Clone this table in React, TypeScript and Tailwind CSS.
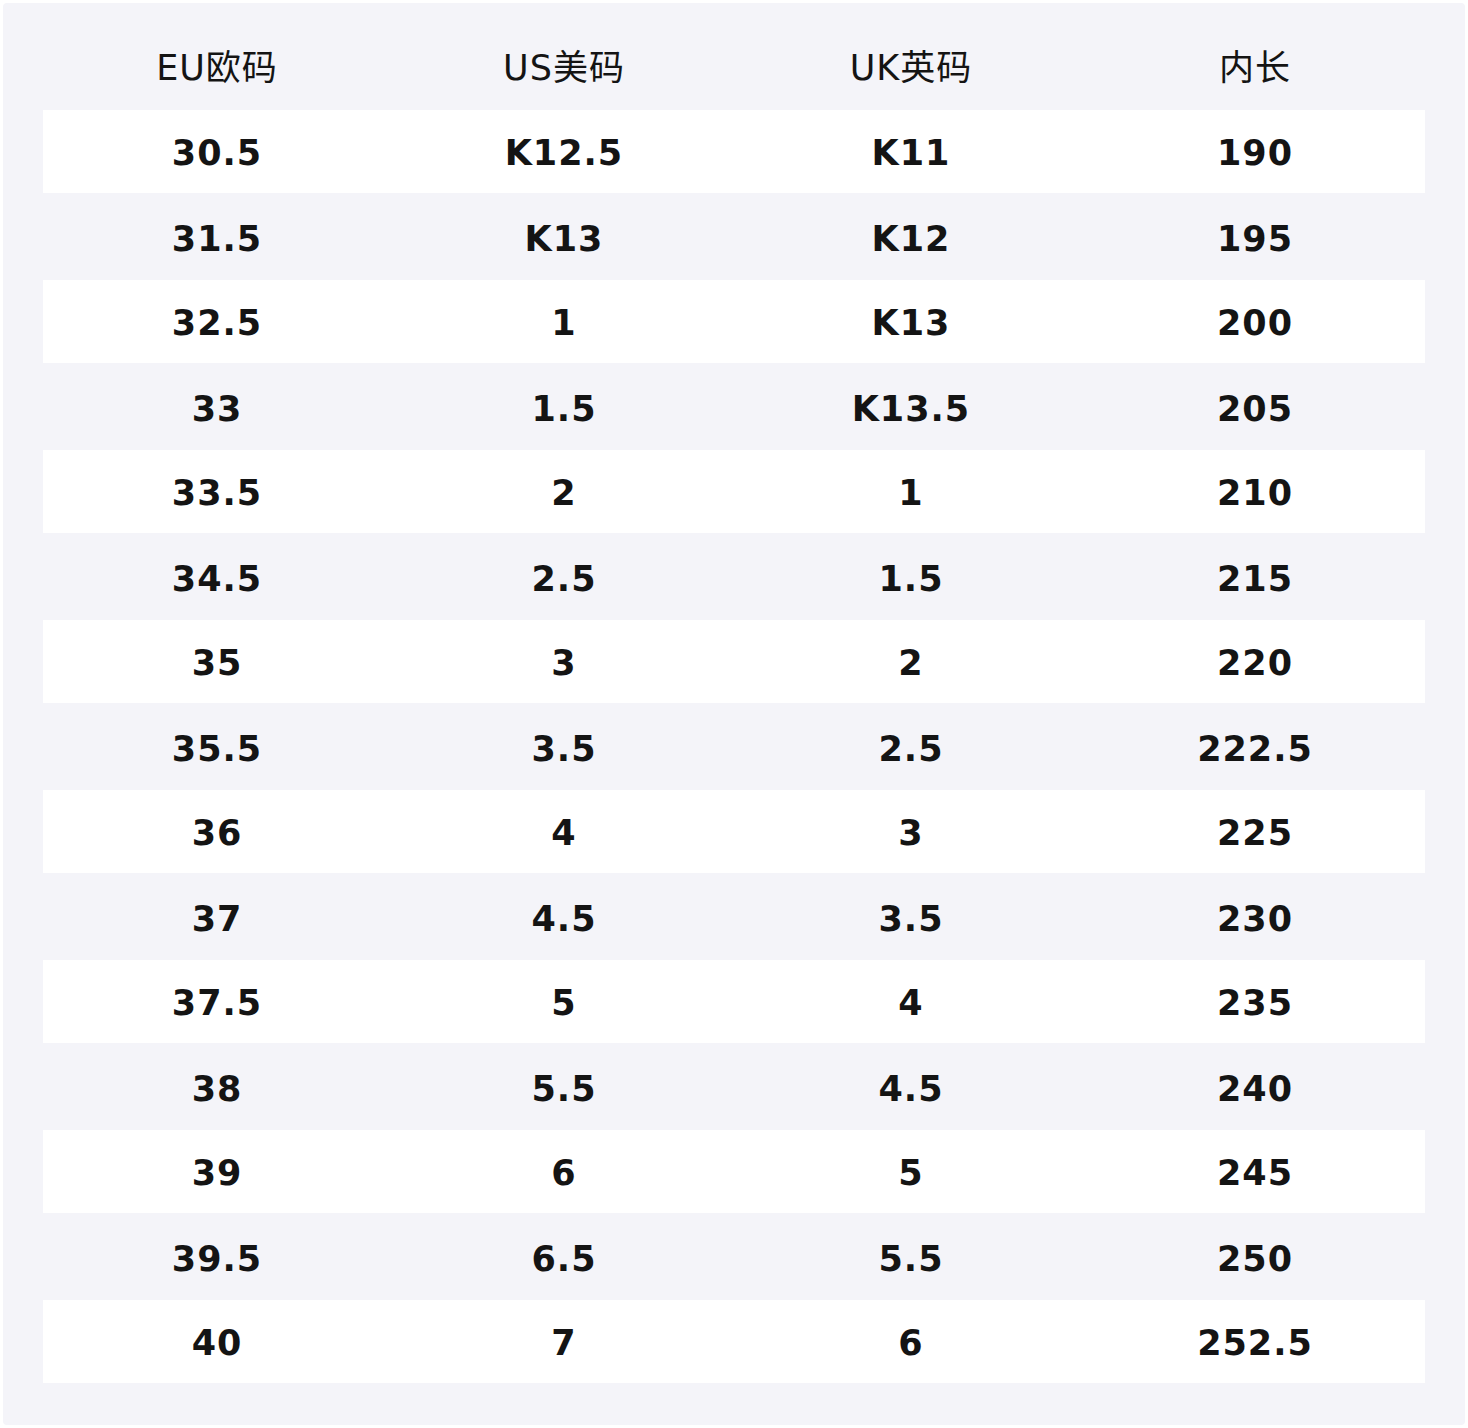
const headers = ['EU欧码', 'US美码', 'UK英码', '内长']

const rows: string[][] = [
  ['30.5', 'K12.5', 'K11', '190'],
  ['31.5', 'K13', 'K12', '195'],
  ['32.5', '1', 'K13', '200'],
  ['33', '1.5', 'K13.5', '205'],
  ['33.5', '2', '1', '210'],
  ['34.5', '2.5', '1.5', '215'],
  ['35', '3', '2', '220'],
  ['35.5', '3.5', '2.5', '222.5'],
  ['36', '4', '3', '225'],
  ['37', '4.5', '3.5', '230'],
  ['37.5', '5', '4', '235'],
  ['38', '5.5', '4.5', '240'],
  ['39', '6', '5', '245'],
  ['39.5', '6.5', '5.5', '250'],
  ['40', '7', '6', '252.5'],
]

export default function App() {
  return (
    <div className="w-[1468px] h-[1428px] bg-white p-[3px] font-['DejaVu_Sans','Noto_Sans_CJK_SC',sans-serif] text-[#141414]">
      <div className="h-full rounded-[4px] bg-[#f4f4f9] px-[40px]">
        <div className="grid grid-cols-[348px_346px_348px_1fr] h-[107px] pt-[23px] items-center text-[35px] tracking-[1px]">
          {headers.map((h) => (
            <div key={h} className="text-center">
              {h}
            </div>
          ))}
        </div>
        {rows.map((row, i) => (
          <div
            key={row[0]}
            className={`grid grid-cols-[348px_346px_348px_1fr] h-[85px] pt-[3px] items-center text-[35px] font-bold tracking-[1px] ${
              i % 2 === 0 ? 'bg-white border-b-2 border-[#f4f4f9]' : ''
            }`}
          >
            {row.map((cell, j) => (
              <div key={j} className="text-center">
                {cell}
              </div>
            ))}
          </div>
        ))}
      </div>
    </div>
  )
}
